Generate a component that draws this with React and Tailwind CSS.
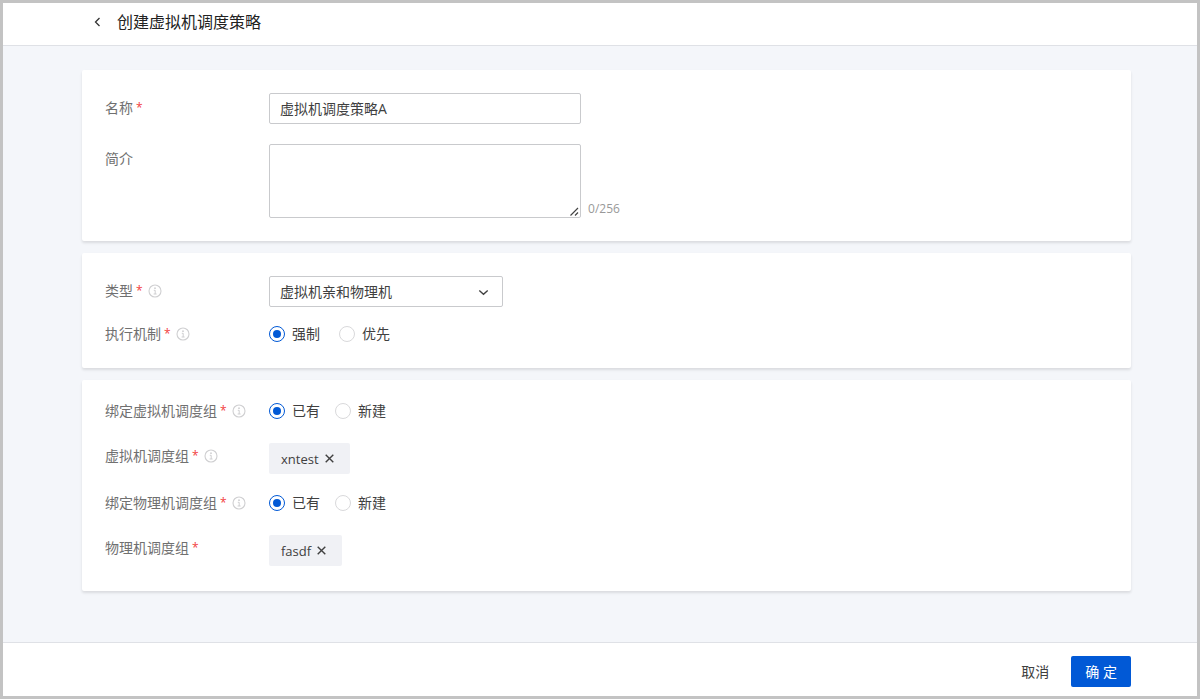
import { useState } from "react";

function InfoIcon() {
  return (
    <svg className="ml-[5px] size-[14px] shrink-0 text-[#cfcfd1]" viewBox="0 0 14 14" fill="none" aria-hidden="true">
      <circle cx="7" cy="7" r="6" stroke="currentColor" strokeWidth="1.1" />
      <circle cx="7" cy="4.2" r="0.9" fill="currentColor" />
      <path d="M5.8 6.3H7.2V10M5.6 10H8.6" stroke="currentColor" strokeWidth="1" />
    </svg>
  );
}

function LabelContent({ text, required, info }) {
  return (
    <>
      <span>{text}</span>
      {required && <span className="ml-[3px] text-[12px] text-[#f23c3c]">*</span>}
      {info && <InfoIcon />}
    </>
  );
}

function Field({ id, text, required, info, children }) {
  return (
    <div className="flex items-start">
      <label htmlFor={id} className="flex h-[30px] w-[164px] shrink-0 items-center text-[#707070]">
        <LabelContent text={text} required={required} info={info} />
      </label>
      {children}
    </div>
  );
}

function RadioField({ name, text, info, options, spacing }) {
  const [value, setValue] = useState(options[0]);
  return (
    <div role="radiogroup" aria-label={text} className="flex items-center">
      <div className="flex w-[164px] shrink-0 items-center text-[#707070]">
        <LabelContent text={text} required info={info} />
      </div>
      <div className={`flex items-center ${spacing}`}>
        {options.map((option) => (
          <label key={option} className="flex items-center gap-[7px]">
            <input
              type="radio"
              name={name}
              checked={value === option}
              onChange={() => setValue(option)}
              className="grid size-4 appearance-none place-items-center rounded-full border border-[#d9d9db] bg-white before:size-2 before:rounded-full checked:border-[#0159d6] checked:before:bg-[#0159d6]"
            />
            <span>{option}</span>
          </label>
        ))}
      </div>
    </div>
  );
}

function TagField({ text, info, tag }) {
  const [shown, setShown] = useState(true);
  return (
    <div role="group" aria-label={text} className="flex h-[31px] items-start">
      <div className="flex h-7 w-[164px] shrink-0 items-center text-[#707070]">
        <LabelContent text={text} required info={info} />
      </div>
      {shown && (
        <div className="mt-px flex h-[31px] items-center gap-1 rounded-xs bg-[#f0f1f5] px-3">
          <span className="text-[13px]">{tag}</span>
          <button type="button" aria-label={`移除 ${tag}`} onClick={() => setShown(false)} className="pr-1 pl-[2px]">
            <svg className="size-[9px]" viewBox="0 0 9 9" fill="none" stroke="currentColor" strokeWidth="1.4">
              <path d="M0.7 0.7L8.3 8.3M8.3 0.7L0.7 8.3" />
            </svg>
          </button>
        </div>
      )}
    </div>
  );
}

const card = "flex flex-col rounded-xs bg-white px-[23px] shadow-[0_2px_3px_rgba(0,0,0,0.11)]";
const box = "border border-[#c9cacd] bg-white px-[10px] rounded-xs outline-none focus:border-[#0159d6]";

export default function App() {
  const [name, setName] = useState("虚拟机调度策略A");
  const [intro, setIntro] = useState("");

  return (
    <div className="flex min-h-screen flex-col border-[3px] border-[#c3c3c3] bg-[#f4f6fa] font-['Open_Sans','Noto_Sans_CJK_SC',sans-serif] text-[14px] leading-5 text-[#404040]">
      <header className="flex h-[43px] items-center gap-4 border-b border-[#dfe1e6] bg-white pr-[66px] pb-1 pl-[91px]">
        <a href="#back" aria-label="返回" className="text-[#333]">
          <svg className="h-[10px] w-[7px]" viewBox="0 0 7 10" fill="none" stroke="currentColor" strokeWidth="1.3">
            <path d="M5.5 1L1.5 5L5.5 9" />
          </svg>
        </a>
        <h1 className="text-[16px] leading-6 text-[#222]">创建虚拟机调度策略</h1>
      </header>

      <main className="flex flex-1 flex-col gap-3 pt-6 pr-[66px] pb-6 pl-[79px]">
        <section className={`${card} gap-5 pt-[23px] pb-[23px]`}>
          <Field id="name" text="名称" required>
            <input
              id="name"
              value={name}
              onChange={(e) => setName(e.target.value)}
              className={`${box} h-[31px] w-[312px] pb-[2px]`}
            />
          </Field>
          <Field id="intro" text="简介">
            <div className="flex items-end gap-[7px]">
              <div className="relative flex">
                <textarea
                  id="intro"
                  maxLength={256}
                  value={intro}
                  onChange={(e) => setIntro(e.target.value)}
                  className={`${box} h-[74px] w-[312px] py-1 [&::-webkit-resizer]:hidden`}
                />
                <svg
                  className="pointer-events-none absolute right-[2px] bottom-[2px] size-[9px] text-[#444]"
                  viewBox="0 0 9 9"
                  fill="none"
                  stroke="currentColor"
                  strokeWidth="1.2"
                >
                  <path d="M0.5 8.5L8 1M5 8.5L8 5.5" />
                </svg>
              </div>
              <span className="text-[12px] leading-[18px] text-[#999]">{intro.length}/256</span>
            </div>
          </Field>
        </section>

        <section className={`${card} gap-[17px] pt-[23px] pb-6`}>
          <Field id="type" text="类型" required info>
            <div className="relative flex">
              <select id="type" className={`${box} h-[31px] w-[234px] appearance-none pr-8`}>
                <option>虚拟机亲和物理机</option>
              </select>
              <svg
                className="pointer-events-none absolute top-3 right-[14px] h-2 w-[11px]"
                viewBox="0 0 11 8"
                fill="none"
                stroke="currentColor"
                strokeWidth="1.4"
              >
                <path d="M1.3 2.5L5.5 6.2L9.7 2.5" />
              </svg>
            </div>
          </Field>
          <RadioField name="mode" text="执行机制" info options={["强制", "优先"]} spacing="gap-[19px]" />
        </section>

        <section className={`${card} gap-5 pt-[21px] pb-[26px]`}>
          <div className="flex flex-col gap-[21px]">
            <RadioField name="vm" text="绑定虚拟机调度组" info options={["已有", "新建"]} spacing="gap-[15px]" />
            <TagField text="虚拟机调度组" info tag="xntest" />
          </div>
          <div className="flex flex-col gap-[21px]">
            <RadioField name="host" text="绑定物理机调度组" info options={["已有", "新建"]} spacing="gap-[15px]" />
            <TagField text="物理机调度组" tag="fasdf" />
          </div>
        </section>
      </main>

      <footer className="flex h-[54px] items-center justify-end gap-[22px] border-t border-[#dfe1e6] bg-white pt-1 pr-[66px]">
        <button type="button">取消</button>
        <button type="button" className="h-[31px] rounded-xs bg-[#0159d6] px-[14px] text-white">
          确 定
        </button>
      </footer>
    </div>
  );
}
